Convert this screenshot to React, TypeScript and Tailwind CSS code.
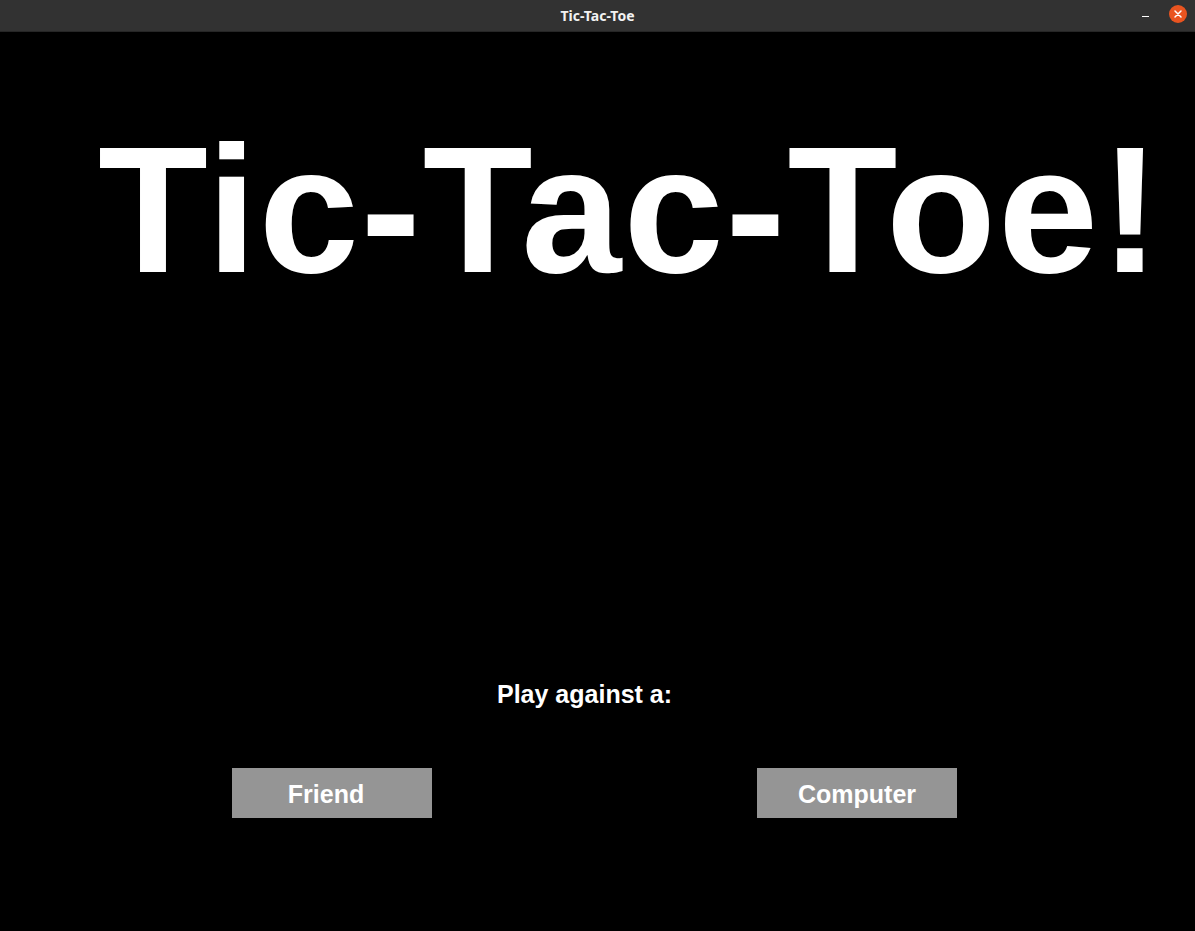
import React from "react";

export default function App() {
  return (
    <div className="w-[1195px] h-[931px] bg-black flex flex-col overflow-hidden" style={{ fontFamily: '"Liberation Sans", Arial, sans-serif' }}>
      <div className="h-[32px] bg-[#323232] flex items-center relative shrink-0 border-b border-[#262626]">
        <div className="flex-1 text-center text-[14px] font-bold text-[#f2f2f2]" style={{ fontFamily: '"Noto Sans", "DejaVu Sans", sans-serif' }}>
          Tic-Tac-Toe
        </div>
        <div className="absolute right-[46px] top-[16px] w-[7px] h-[1px] bg-white" />
        <div className="absolute right-[8px] top-[5px] w-[18px] h-[18px] rounded-full bg-[#e95420] flex items-center justify-center">
          <svg width="10" height="10" viewBox="0 0 10 10">
            <path d="M2 2 L8 8 M8 2 L2 8" stroke="white" strokeWidth="1.5" strokeLinecap="round" />
          </svg>
        </div>
      </div>
      <div className="flex-1 flex flex-col">
        <div className="pt-[88px] pl-[98px] text-white font-bold text-[180px] leading-none whitespace-nowrap tracking-[2px]">
          Tic-Tac-Toe!
        </div>
        <div className="mt-[382px] pl-[497px] text-white font-bold text-[25px] leading-none">
          Play against a:
        </div>
        <div className="mt-[61px] flex">
          <div className="ml-[232px] w-[200px] h-[50px] bg-[#959595] flex items-center justify-center pr-[12px] pt-[2px] text-white font-bold text-[25px] leading-none">
            Friend
          </div>
          <div className="ml-[325px] w-[200px] h-[50px] bg-[#959595] flex items-center justify-center pt-[2px] text-white font-bold text-[25px] leading-none">
            Computer
          </div>
        </div>
      </div>
    </div>
  );
}
